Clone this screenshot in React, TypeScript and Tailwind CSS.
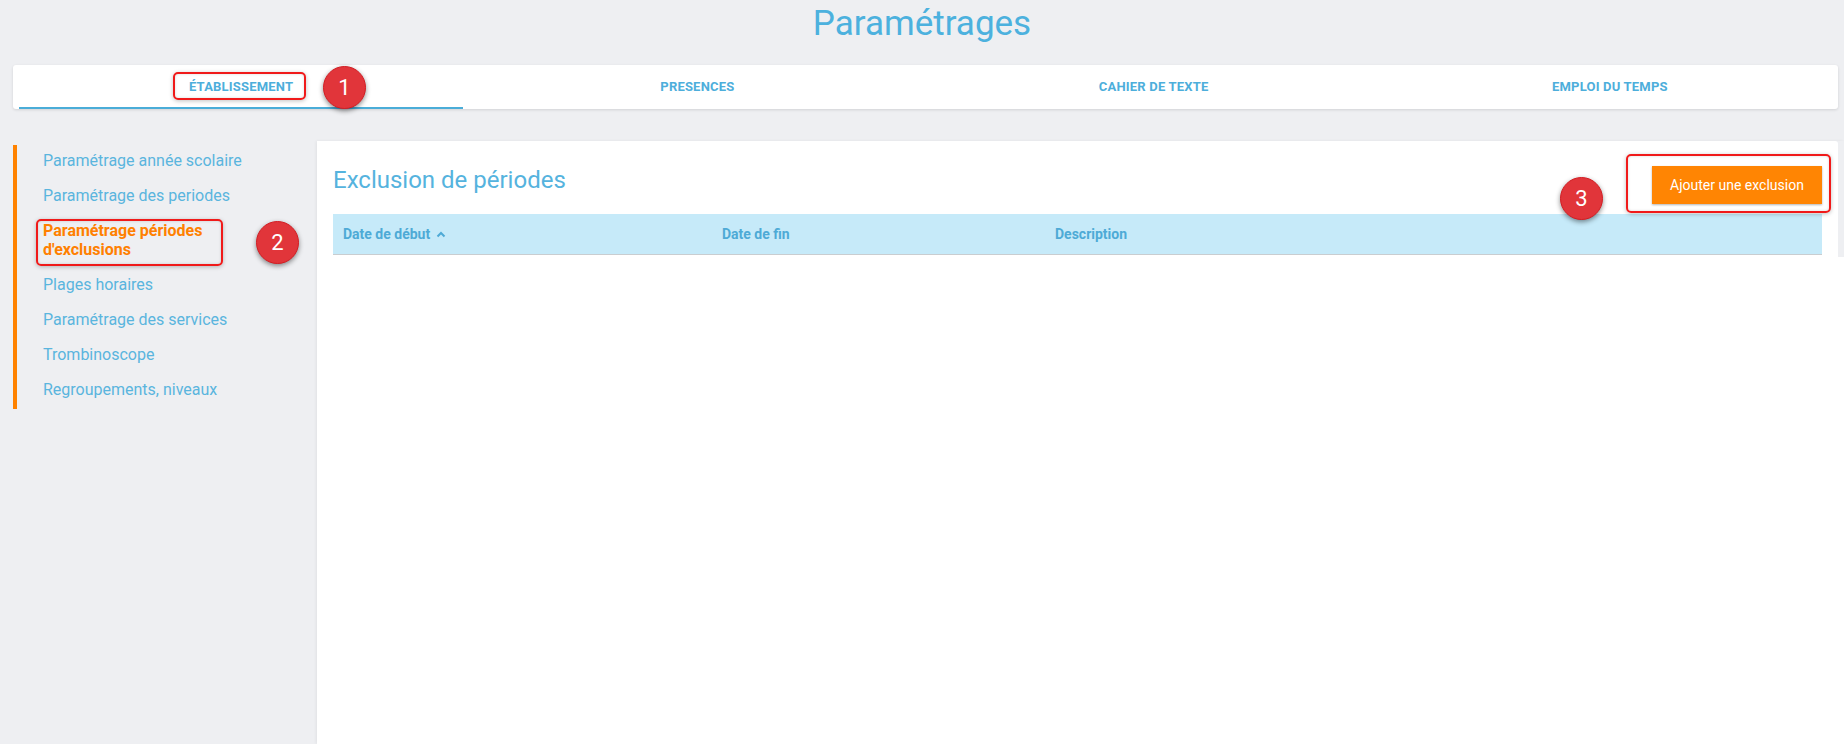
import React from "react";

const tabs = ["Établissement", "Presences", "Cahier de texte", "Emploi du temps"];

const sideItems = [
  { label: "Paramétrage année scolaire" },
  { label: "Paramétrage des periodes" },
  { label: "Paramétrage périodes d'exclusions", active: true },
  { label: "Plages horaires" },
  { label: "Paramétrage des services" },
  { label: "Trombinoscope" },
  { label: "Regroupements, niveaux" },
];

function Marker({ n, className }: { n: number; className: string }) {
  return (
    <div
      className={`absolute w-[43px] h-[43px] rounded-full bg-[#e1353a] border border-[#d41c22] shadow-[0_2px_5px_rgba(0,0,0,0.45)] flex items-center justify-center text-white text-[22px] leading-none ${className}`}
    >
      {n}
    </div>
  );
}

function Box({ className }: { className: string }) {
  return (
    <div
      className={`absolute border-2 border-[#f01a1a] rounded-[5px] shadow-[0_1px_4px_rgba(0,0,0,0.25),inset_0_0_3px_rgba(0,0,0,0.15)] ${className}`}
    />
  );
}

export default function App() {
  return (
    <div className="relative w-full h-[744px] overflow-hidden bg-[#eeeff2] flex flex-col font-['Roboto','Liberation_Sans',sans-serif]">
      {/* Title */}
      <div className="h-[65px] pt-[3px] text-center text-[35px] leading-[41px] text-[#4cb1de] shrink-0">
        Paramétrages
      </div>

      {/* Tabs */}
      <div className="ml-[13px] mr-[6px] h-[44px] bg-white rounded-[3px] shadow-[0_1px_3px_rgba(0,0,0,0.12)] grid grid-cols-4 shrink-0">
        {tabs.map((t, i) => (
          <div key={t} className="relative flex items-center justify-center">
            <span className="text-[13px] font-bold uppercase text-[#4daedb] tracking-[0.2px]">{t}</span>
            {i === 0 && <div className="absolute left-[6px] right-[6px] bottom-0 h-[2px] bg-[#4aadd8]" />}
          </div>
        ))}
      </div>

      {/* Body */}
      <div className="flex flex-1 mt-[32px] min-h-0">
        {/* Sidebar */}
        <div className="w-[317px] shrink-0 pl-[13px]">
          <div className="mt-[4px] border-l-4 border-[#ff8200] pl-[26px]">
            {sideItems.map((it) => (
              <div
                key={it.label}
                className={`w-[215px] pt-[6px] pb-[10px] text-[16px] leading-[19px] ${
                  it.active ? "text-[#ff8000] font-bold" : "text-[#5ab5de]"
                }`}
              >
                {it.label}
              </div>
            ))}
          </div>
        </div>

        {/* Panel */}
        <div className="flex-1 flex flex-col min-w-0 shadow-[-1px_0_3px_rgba(0,0,0,0.06)]">
          <div className="bg-white mr-[6px] rounded-tr-[3px] px-[16px] pt-[25px] pb-[2px]">
            <div className="flex items-start justify-between">
              <div className="text-[24px] leading-[28px] text-[#55b3de]">Exclusion de périodes</div>
              <button className="h-[38px] w-[170px] bg-[#ff8503] text-white text-[14px] shadow-[0_1px_2px_rgba(0,0,0,0.3)]">
                Ajouter une exclusion
              </button>
            </div>
            <div className="mt-[10px] h-[41px] bg-[#c6eaf9] border-b border-[#c9cdd0] grid grid-cols-[379px_333px_1fr] items-center text-[14px] font-bold text-[#4eaad6]">
              <div className="pl-[10px] flex items-center gap-[6px]">
                Date de début
                <svg width="10" height="7" viewBox="0 0 10 7" className="mt-[1px]">
                  <polyline points="1.5,5.5 5,2 8.5,5.5" fill="none" stroke="#4eaad6" strokeWidth="2" />
                </svg>
              </div>
              <div className="pl-[10px]">Date de fin</div>
              <div className="pl-[10px]">Description</div>
            </div>
          </div>
          <div className="flex-1 bg-white" />
        </div>
      </div>

      {/* Annotations */}
      <Box className="left-[173px] top-[72px] w-[133px] h-[28px]" />
      <Marker n={1} className="left-[323px] top-[66px]" />
      <Box className="left-[36px] top-[219px] w-[187px] h-[47px]" />
      <Marker n={2} className="left-[256px] top-[221px]" />
      <Box className="left-[1626px] top-[154px] w-[205px] h-[59px]" />
      <Marker n={3} className="left-[1560px] top-[177px]" />
    </div>
  );
}
